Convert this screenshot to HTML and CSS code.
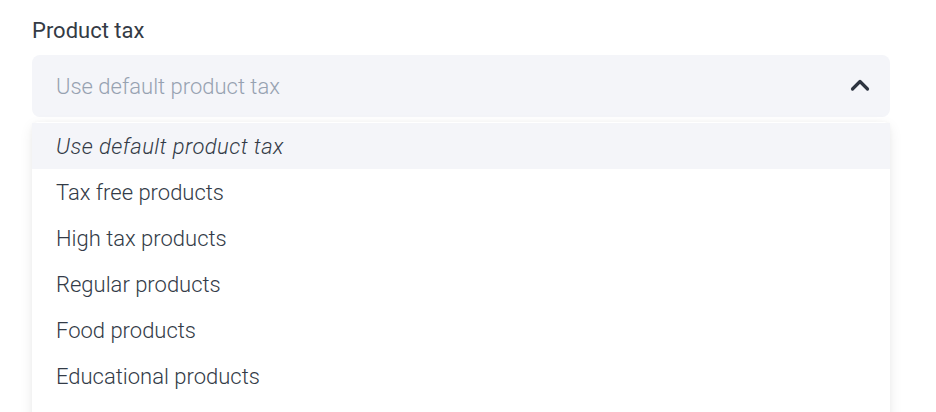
FILE: index.html
```html
<!DOCTYPE html>
<html lang="en">
<head>
<meta charset="utf-8">
<title>Product tax</title>
<link rel="stylesheet" href="styles.css">
</head>
<body>
<div class="field">
  <label class="label">Product tax</label>
  <div class="select">
    <span class="placeholder">Use default product tax</span>
    <svg class="chevron" width="20" height="14" viewBox="0 0 20 14" aria-hidden="true">
      <path d="M2.5 11 L10 3.5 L17.5 11" fill="none" stroke="#2d3440" stroke-width="3.2" stroke-linecap="round" stroke-linejoin="round"/>
    </svg>
  </div>
  <ul class="menu">
    <li class="option option-active">Use default product tax</li>
    <li class="option">Tax free products</li>
    <li class="option">High tax products</li>
    <li class="option">Regular products</li>
    <li class="option">Food products</li>
    <li class="option">Educational products</li>
  </ul>
</div>
</body>
</html>
```

FILE: styles.css
```css
html, body {
  margin: 0;
  padding: 0;
  background: #ffffff;
  overflow: hidden;
  height: 412px;
}
body {
  font-family: Roboto, "Noto Sans", sans-serif;
}
.field {
  padding: 17px 46px 0 32px;
}
.label {
  display: block;
  font-size: 22px;
  line-height: 28px;
  color: #343b45;
  margin-bottom: 10px;
}
.select {
  height: 62px;
  box-sizing: border-box;
  background: #f4f5f9;
  border-radius: 8px;
  display: flex;
  align-items: center;
  justify-content: space-between;
  padding: 0 20px 0 24px;
}
.placeholder {
  font-size: 22px;
  font-weight: 300;
  color: #97a2b1;
}
.chevron {
  display: block;
  margin-top: -3px;
}
.menu {
  list-style: none;
  margin: 5px 0 0 0;
  padding: 1px 0 0 0;
  height: 300px;
  background: #ffffff;
  border-radius: 6px;
  box-shadow: 0 4px 14px rgba(0, 0, 0, 0.08), 0 0 4px rgba(0, 0, 0, 0.03);
}
.option {
  height: 46px;
  display: flex;
  align-items: center;
  padding-left: 24px;
  font-size: 22px;
  font-weight: 300;
  color: #333b47;
}
.option-active {
  background: #f4f5f9;
  font-style: italic;
  letter-spacing: 0.45px;
}
```
